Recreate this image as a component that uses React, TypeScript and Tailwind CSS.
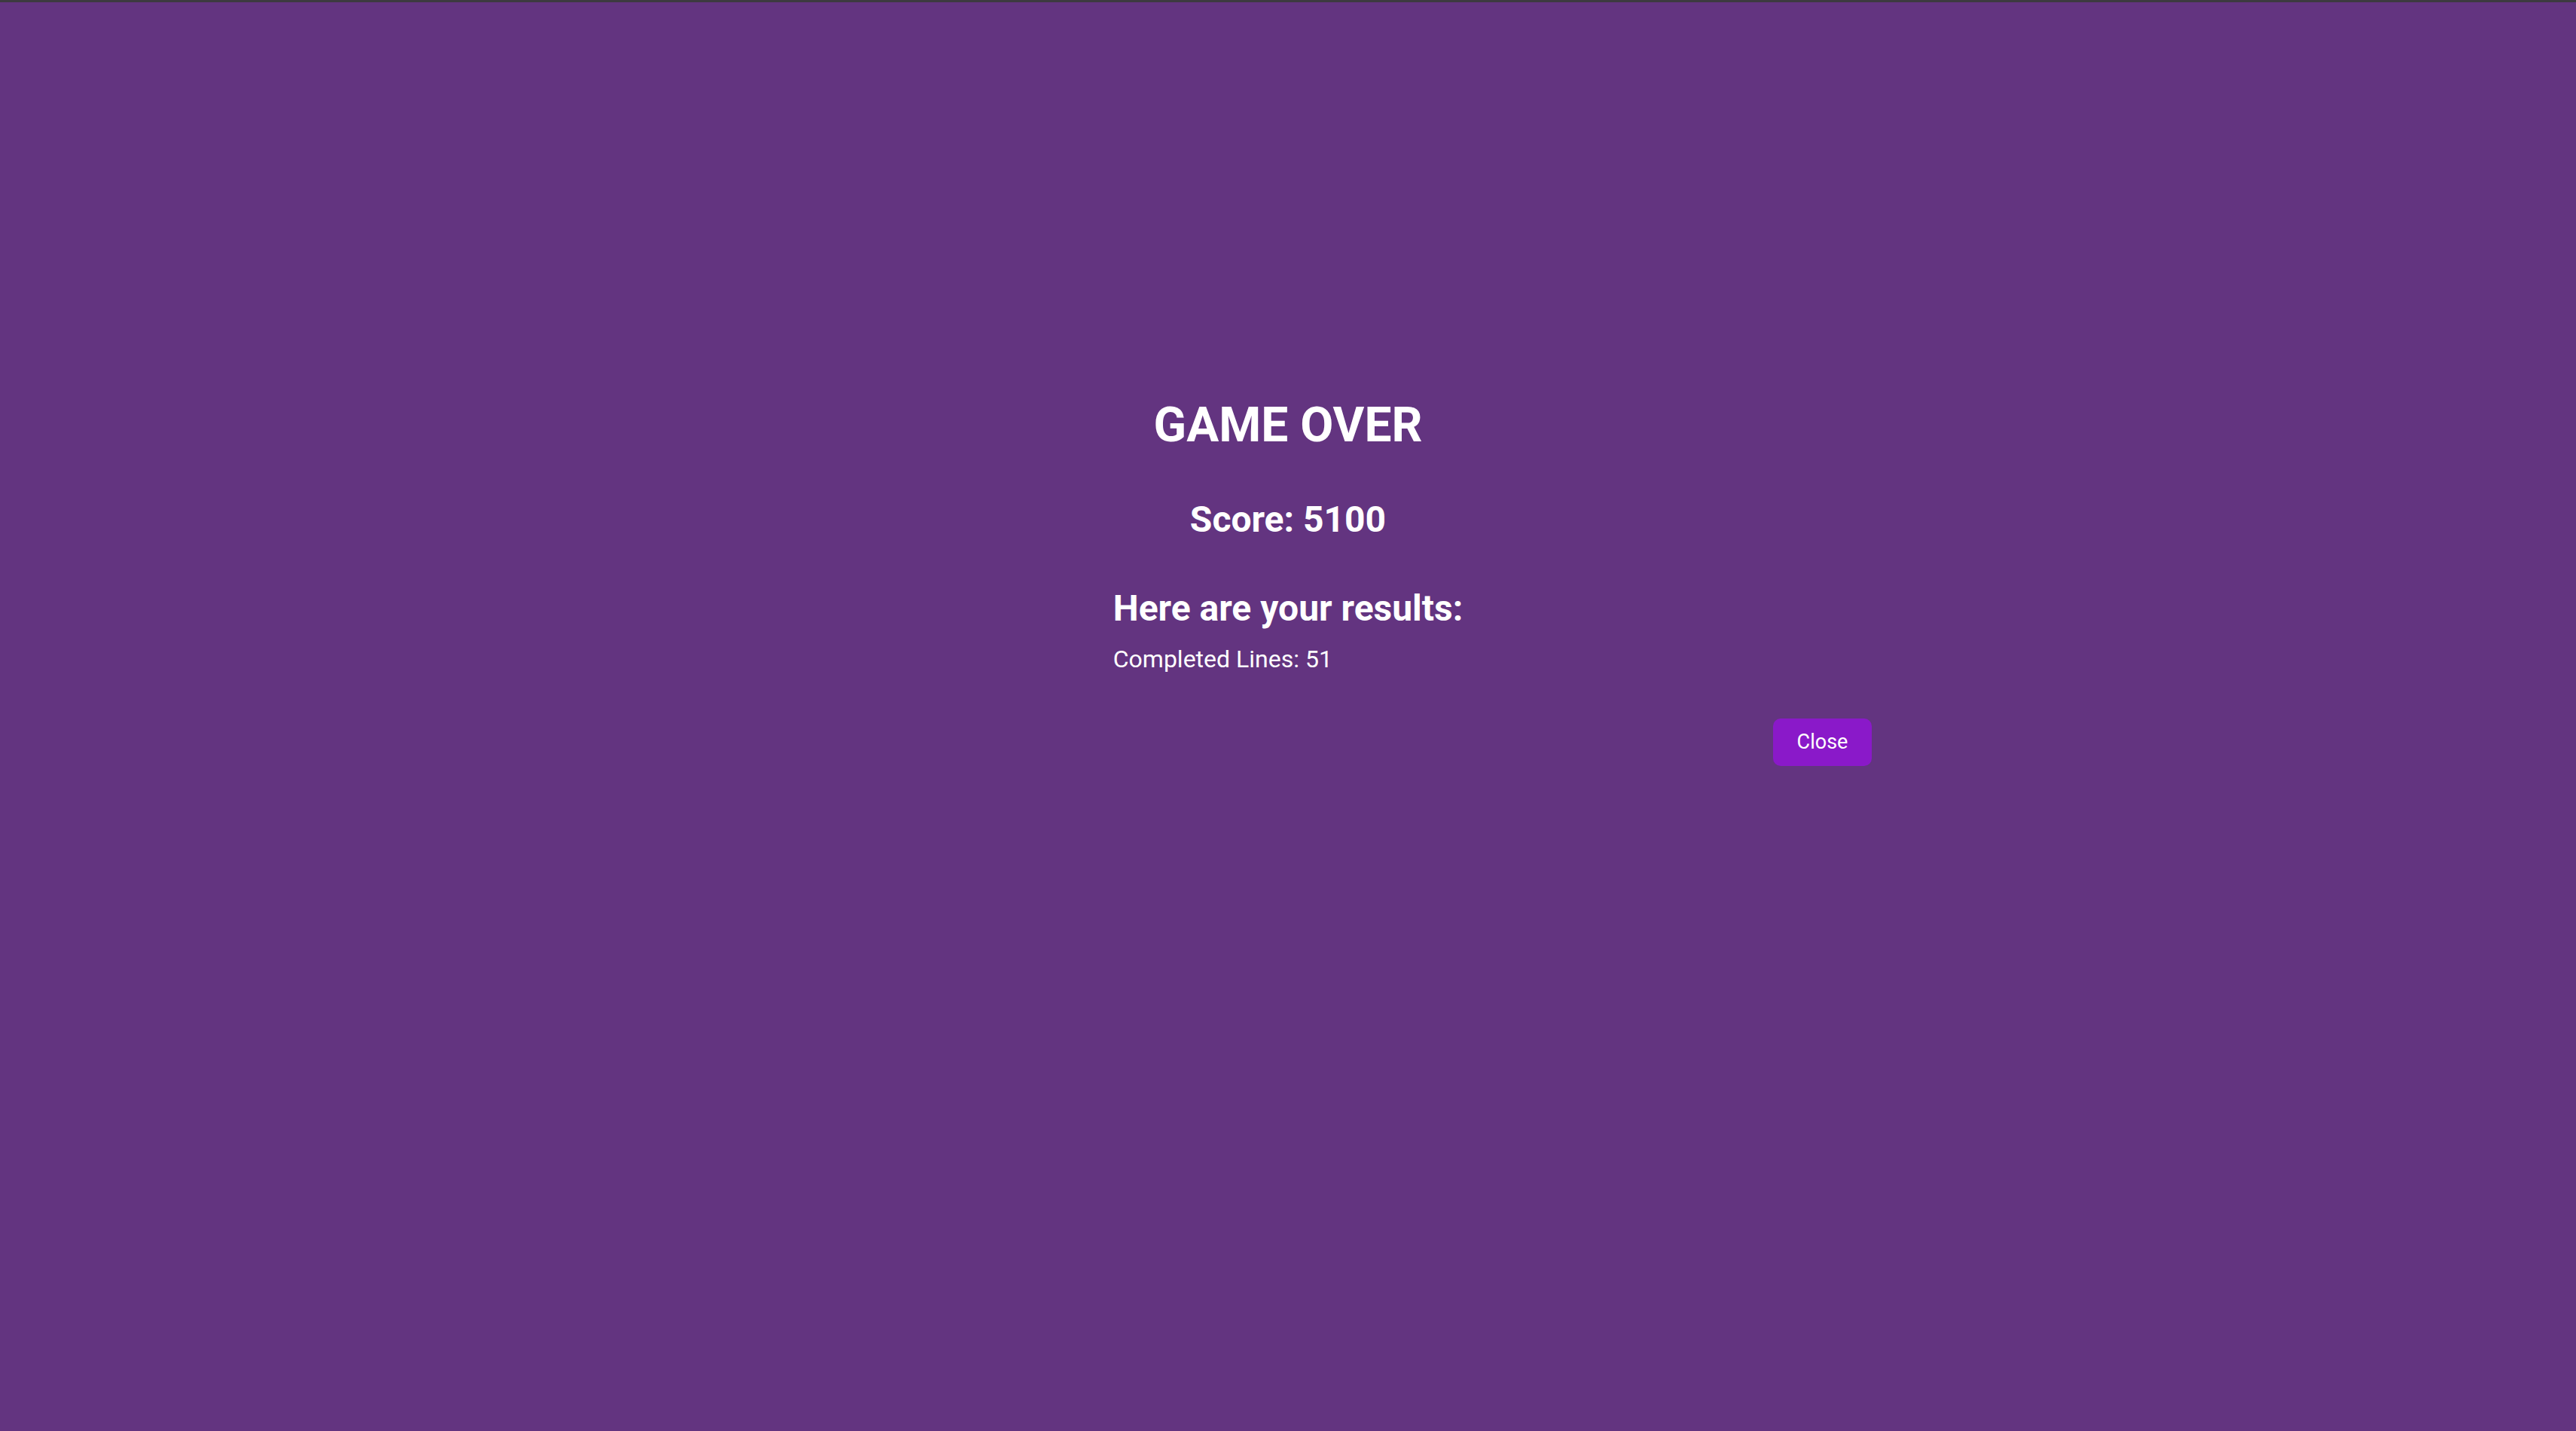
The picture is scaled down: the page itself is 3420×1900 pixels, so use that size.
export default function App() {
  return (
    <div
      className="min-h-screen w-full bg-[#633480] text-white"
      style={{ fontFamily: "Roboto, 'Liberation Sans', sans-serif" }}
    >
      <div className="h-[3px] bg-[#3d3a40]" />

      <div className="pt-[524px]">
        <div className="mx-auto w-[1576px] flex flex-col items-center">
          <h1 className="text-[64px] leading-[75px] font-bold">GAME OVER</h1>
          <h2 className="mt-[60px] text-[48px] leading-[56px] font-bold">Score: 5100</h2>

          <div className="mt-[62px] flex flex-col items-start">
            <h2 className="text-[48px] leading-[56px] font-bold">Here are your results:</h2>
            <p className="mt-[20px] text-[32px] leading-[38px]">Completed Lines: 51</p>
          </div>

          {/* button sits a bit left of the centred column's edge */}
          <div className="mt-[60px] w-full flex justify-end pr-[13px]">
            <button className="h-[63px] w-[131px] rounded-[10px] bg-[#8a19c9] text-[27px] text-white">
              Close
            </button>
          </div>
        </div>
      </div>
    </div>
  )
}
